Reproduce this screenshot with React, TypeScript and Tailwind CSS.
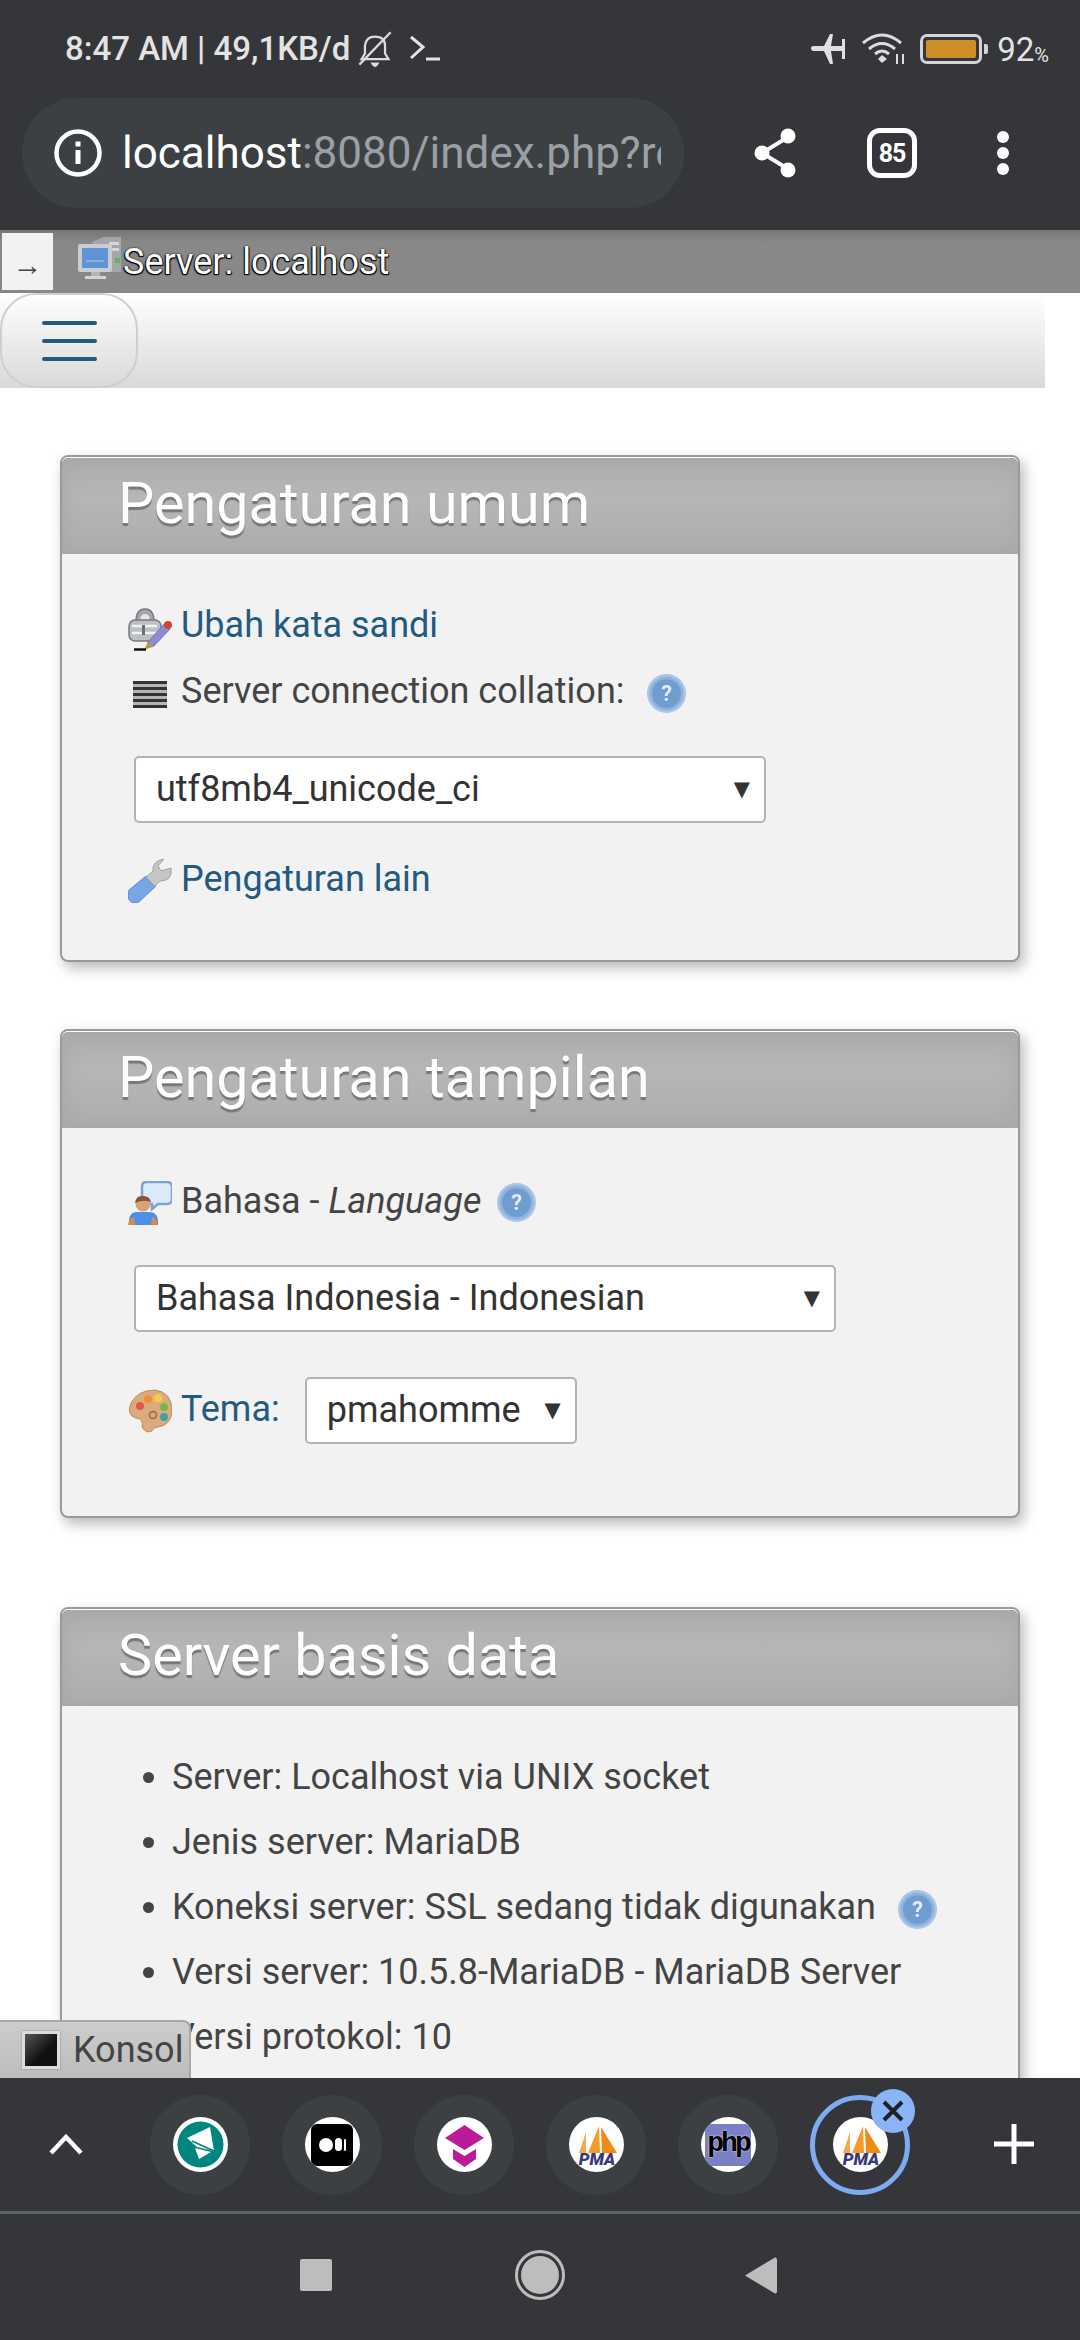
import type { ReactNode } from 'react';

// --- small bitmap-ish phpMyAdmin icons, drawn by hand ---
function LockPenIcon() {
  return (
    <svg viewBox="0 0 44 44" className="w-[44px] h-[44px] blur-[0.5px]">
      <path d="M8 15 Q8 2 17 2 Q26 2 26 15" fill="#a4a6ab" stroke="#77797e" strokeWidth="1.5" />
      <path d="M12 14 Q12 7 17 7 Q22 7 22 14 Z" fill="#e4e5e8" />
      <rect x="1" y="13" width="32" height="21" rx="6" fill="#bcbfc5" stroke="#77797e" strokeWidth="1.5" />
      <path d="M4 19h25M4 26h25" stroke="#f0f1f4" strokeWidth="2.5" />
      <rect x="14" y="18" width="3" height="10" fill="#6b6d72" />
      <path d="M20 35 L36 17 L42 22 L26 39 L19 41 Z" fill="#8d8bd6" stroke="#6c6ab8" strokeWidth="0.8" />
      <circle cx="40" cy="18" r="4" fill="#d9432e" />
      <path d="M20 35 L26 39 L16 43 Z" fill="#b79a3a" />
      <path d="M6 42.5h12" stroke="#111" strokeWidth="2.5" />
    </svg>
  );
}

function LinesIcon() {
  return (
    <svg viewBox="0 0 34 30" className="w-[34px] h-[30px] blur-[0.3px]">
      {[2, 8, 14, 20, 26].map((y) => (
        <rect key={y} x="0" y={y} width="34" height="3" fill="#333" />
      ))}
      {[5, 11, 17, 23].map((y) => (
        <rect key={y} x="0" y={y} width="34" height="3" fill="#b5b5b5" />
      ))}
    </svg>
  );
}

function WrenchIcon() {
  return (
    <svg viewBox="0 0 44 44" className="w-[44px] h-[44px] blur-[0.4px]">
      <path d="M1 31 L18 17 L28 27 L11 43 Q4 45 1 41 Q-1 36 1 31 Z" fill="#7aa5e4" stroke="#5f8dd0" strokeWidth="1" />
      <path d="M18 18 L25 12 Q24 2 36 0 L30 7 L33 12 L43 9 Q45 22 32 22 L27 27 Z" fill="#c6c6c6" stroke="#a0a0a0" strokeWidth="1" />
    </svg>
  );
}

function HelpIcon() {
  return (
    <svg viewBox="0 0 38 38" className="w-[39px] h-[39px] shrink-0 blur-[0.4px]">
      <circle cx="19" cy="19" r="19" fill="#a9c6e6" />
      <circle cx="19" cy="19" r="16.5" fill="#8fb3dc" />
      <circle cx="19" cy="19" r="14" fill="#6f9dd0" />
      <text x="19" y="26.5" textAnchor="middle" fontSize="21" fontWeight="700" fontFamily="Roboto, sans-serif" fill="#e3ecf6">?</text>
    </svg>
  );
}

function LanguageIcon() {
  return (
    <svg viewBox="0 0 44 44" className="w-[44px] h-[44px] blur-[0.4px]">
      <path d="M18 1 H39 Q44 1 44 6 V18 Q44 23 39 23 H30 L24 28 V23 H19 Q14 23 14 18 V6 Q14 1 18 1 Z" fill="#dbe9f8" stroke="#7ba3d6" strokeWidth="2.5" />
      <circle cx="15" cy="23" r="7.5" fill="#d9a37a" />
      <path d="M7 22 Q8 14 15 15 Q22 15 23 21 Q15 18 7 22 Z" fill="#8a5230" />
      <path d="M1 44 Q0 31 9 31 H21 Q31 31 30 44 Z" fill="#4d8fe6" />
      <path d="M0 44 Q1 37 6 36 L7 44 Z M30 44 Q29 37 24 36 L23 44 Z" fill="#d98a4c" />
    </svg>
  );
}

function PaletteIcon() {
  return (
    <svg viewBox="0 0 44 44" className="w-[44px] h-[44px] blur-[0.4px]">
      <path d="M3 14 Q10 1 27 1 Q43 3 44 20 Q44 36 30 38 Q25 38 24 42 Q18 45 14 38 Q16 30 8 29 Q-2 26 3 14 Z" fill="#dcab7c" stroke="#bd8a5b" strokeWidth="1" />
      <circle cx="12" cy="17" r="4" fill="#e2574f" />
      <circle cx="20" cy="10" r="4" fill="#ec8d3c" />
      <circle cx="30" cy="9" r="4" fill="#f0cf48" />
      <circle cx="36" cy="18" r="4" fill="#74b84c" />
      <circle cx="36" cy="28" r="4" fill="#3c9fb5" />
      <circle cx="25" cy="26" r="3.5" fill="none" stroke="#8a6a4a" strokeWidth="1.5" />
    </svg>
  );
}

function ServerIcon() {
  return (
    <svg viewBox="0 0 44 44" className="w-[44px] h-[44px] shrink-0 blur-[0.4px]">
      <path d="M14 6 L26 1 H43 V36 H14 Z" fill="#a3a5a8" />
      <rect x="31" y="6" width="10" height="3" fill="#d6d6d6" />
      <rect x="31" y="12" width="10" height="3" fill="#d6d6d6" />
      <rect x="37" y="22" width="5" height="5" fill="#58b85a" />
      <rect x="0" y="8" width="34" height="28" rx="2" fill="#c9ccd0" />
      <rect x="4" y="12" width="26" height="20" fill="#5f93d6" />
      <rect x="8" y="24" width="18" height="2" fill="#86aee0" />
      <path d="M13 36h9v4h-9z" fill="#b5b5b5" />
      <path d="M7 40h21v3H7z" fill="#d4d4d4" />
    </svg>
  );
}

function Arrow() {
  return <span className="ml-auto mr-[6px] text-[#333] text-[21px] leading-none font-[family-name:'DejaVu_Sans',sans-serif]">▼</span>;
}

function SelectBox({ value, className }: { value: string; className: string }) {
  return (
    <div className={`flex items-center pl-[20px] pr-[8px] bg-white border-2 border-[#b3b3b3] rounded-[5px] text-[#333] ${className}`}>
      <span className="pb-[2px]">{value}</span>
      <Arrow />
    </div>
  );
}

function Row({ icon, children }: { icon: ReactNode; children: ReactNode }) {
  return (
    <div className="flex items-center h-[44px]">
      <div className="w-[44px] h-[44px] flex items-center justify-center mr-[9px] shrink-0">{icon}</div>
      {children}
    </div>
  );
}

function Card({ title, children, className }: { title: string; children: ReactNode; className?: string }) {
  return (
    <section className={`mx-[60px] border-2 border-[#9a9a9a] rounded-[8px] bg-[#f2f2f2] shadow-[4px_6px_14px_rgba(0,0,0,0.28)] ${className ?? ''}`}>
      <div className="h-[97px] pl-[56px] flex items-center rounded-t-[6px] border-t border-white bg-[linear-gradient(#adadad,#b6b6b6_40%,#adadad)] shadow-[inset_0_0_20px_#a6a6a6]">
        <h2 className="text-[57.5px] leading-none text-white [text-shadow:0_3px_1px_#777] pb-[4px]">{title}</h2>
      </div>
      {children}
    </section>
  );
}

// --- browser tab favicons ---
function PmaLogo() {
  return (
    <svg viewBox="0 0 55 55" className="w-[55px] h-[55px]">
      <circle cx="27.5" cy="27.5" r="27.5" fill="#fff" />
      <path d="M10 36 L17 15 L17 36 Z" fill="#f6a94a" />
      <path d="M19 36 L30 9 L31 36 Z" fill="#f49b2c" />
      <path d="M33 36 L32 10 L48 36 Z" fill="#f08a17" />
      <text x="28" y="48" textAnchor="middle" fontSize="17" fontWeight="900" fontStyle="italic" fontFamily="Roboto, sans-serif" fill="#3a3a78">PMA</text>
    </svg>
  );
}

function TabBubble({ children }: { children: ReactNode }) {
  return (
    <div className="w-[100px] h-[100px] rounded-full bg-[#3c4043] flex items-center justify-center shrink-0">{children}</div>
  );
}

function White({ children }: { children: ReactNode }) {
  return <div className="w-[55px] h-[55px] rounded-full bg-white overflow-hidden flex items-center justify-center">{children}</div>;
}

export default function App() {
  return (
    <div className="w-[1080px] h-[2340px] flex flex-col overflow-hidden bg-white font-[family-name:Roboto,sans-serif] text-[36px] text-[#444]">
      {/* status bar + browser toolbar */}
      <header className="h-[230px] shrink-0 bg-[#35363a]">
        <div className="h-[98px] pl-[65px] pr-[31px] flex items-center text-[#e3e3e3]">
          <span className="text-[33px] font-medium leading-none pb-[2px] whitespace-nowrap">8:47 AM | 49,1KB/d</span>
          <svg viewBox="0 0 34 34" className="w-[38px] h-[38px] ml-[6px]" fill="none" stroke="#dcdcdc" strokeWidth="2">
            <path d="M5 26 H29 L26 21 V14 Q26 6 17 6 Q9 6 8 14 V21 Z" />
            <path d="M3 31 L31 2" />
            <path d="M13 29 H21 Q19 33 17 33 Q15 33 13 29 Z" fill="#dcdcdc" stroke="none" />
          </svg>
          <svg viewBox="0 0 34 30" className="w-[34px] h-[30px] ml-[15px]" fill="none" stroke="#e3e3e3" strokeWidth="3">
            <path d="M2 3 L14 13 L2 24" />
            <path d="M17 25 H31" />
          </svg>
          <div className="ml-auto flex items-center">
            <svg viewBox="0 0 35 30" className="w-[35px] h-[30px]" fill="#e0e0e0">
              <path d="M0 14 Q0 12 3 12 H13 L19 0 H22 L20 12 H31 V5 H34 V25 H31 V17 H20 L22 30 H19 L13 17 H3 Q0 17 0 14 Z" />
            </svg>
            <svg viewBox="0 0 44 32" className="w-[44px] h-[32px] ml-[16px]" fill="none" stroke="#dcdcdc" strokeWidth="3">
              <path d="M1 10 Q20 -6 39 10" />
              <path d="M7 16 Q20 5 33 16" />
              <path d="M13 21 Q20 15 27 21" />
              <path d="M16 26 L20 30 L25 26 L20 22 Z" fill="#dcdcdc" stroke="none" />
              <path d="M35 21 V31 M41 21 V31" strokeWidth="2" />
            </svg>
            <div className="ml-[14px] w-[62px] h-[30px] border-[3px] border-[#d4d4d4] rounded-[7px] p-[3px] flex">
              <div className="w-full h-full bg-[#ce8f2b] rounded-[2px]" />
            </div>
            <div className="w-[4px] h-[10px] ml-[2px] bg-[#d4d4d4] rounded-r-[2px]" />
            <span className="ml-[9px] text-[33px] leading-none">92</span>
            <span className="text-[20px] leading-none self-end mb-[1px]">%</span>
          </div>
        </div>
        <div className="flex items-center h-[110px]">
          <div className="ml-[22px] w-[662px] h-[110px] rounded-full bg-[#3c4043] flex items-center pl-[32px]">
            <svg viewBox="0 0 48 48" className="w-[48px] h-[48px] shrink-0" fill="none">
              <circle cx="24" cy="24" r="21.5" stroke="#fff" strokeWidth="4.5" />
              <rect x="21.5" y="21" width="5" height="14" fill="#fff" />
              <rect x="21.5" y="12.5" width="5" height="5" fill="#fff" />
            </svg>
            <div className="ml-[20px] w-[539px] overflow-hidden whitespace-nowrap text-[44px] leading-none text-[#9aa0a6]">
              <span className="text-white">localhost</span>:8080/index.php?redirect
            </div>
          </div>
          <svg viewBox="0 0 44 50" className="w-[44px] h-[50px] ml-[70px]" fill="#fff">
            <path d="M34 9 L8 25 L34 41" fill="none" stroke="#fff" strokeWidth="4" />
            <circle cx="34" cy="8" r="7.5" />
            <circle cx="8" cy="25" r="7.5" />
            <circle cx="34" cy="42" r="7.5" />
          </svg>
          <div className="ml-[69px] w-[50px] h-[50px] border-[5px] border-white rounded-[13px] flex items-center justify-center text-white text-[25px] font-bold leading-none tracking-[-1px]">
            85
          </div>
          <div className="ml-[80px] flex flex-col gap-[4px]">
            <span className="w-[12px] h-[12px] rounded-full bg-white" />
            <span className="w-[12px] h-[12px] rounded-full bg-white" />
            <span className="w-[12px] h-[12px] rounded-full bg-white" />
          </div>
        </div>
      </header>

      {/* server breadcrumb */}
      <div className="h-[63px] shrink-0 flex items-center bg-[linear-gradient(#777,#888_20%,#888)]">
        <div className="ml-[2px] w-[51px] h-[57px] bg-[#f2f2f2] flex items-end justify-center text-[#444] text-[30px] leading-[50px] font-[family-name:'Liberation_Sans',sans-serif]">→</div>
        <div className="ml-[25px] mb-[8px]"><ServerIcon /></div>
        <span className="ml-[1px] text-white text-[36px] leading-none [text-shadow:0_0_2px_#000,1px_1px_1px_#000,-1px_1px_1px_#000]">Server: localhost</span>
      </div>

      {/* hamburger strip */}
      <div className="h-[95px] w-[1045px] shrink-0 bg-[linear-gradient(#fff,#d9d9d9)]">
        <div className="w-[138px] h-[95px] rounded-[36px] border-2 border-[#cfcfcf] flex flex-col items-center justify-center gap-[14px]">
          <span className="w-[55px] h-[4px] rounded-full bg-[#235a81]" />
          <span className="w-[55px] h-[4px] rounded-full bg-[#235a81]" />
          <span className="w-[55px] h-[4px] rounded-full bg-[#235a81]" />
        </div>
      </div>

      {/* page content */}
      <main className="relative flex-1 overflow-hidden bg-white pt-[67px]">
        <Card title="Pengaturan umum">
          <div className="pl-[66px] pt-[53px] pb-[57px]">
            <Row icon={<LockPenIcon />}>
              <a className="text-[#235a81] pb-[8px]">Ubah kata sandi</a>
            </Row>
            <div className="mt-[21px]">
              <Row icon={<LinesIcon />}>
                <span className="pb-[7px]">Server connection collation:</span>
                <span className="ml-[23px] pb-[2px]"><HelpIcon /></span>
              </Row>
            </div>
            <SelectBox value="utf8mb4_unicode_ci" className="mt-[40px] ml-[6px] w-[632px] h-[67px]" />
            <div className="mt-[36px]">
              <Row icon={<WrenchIcon />}>
                <a className="text-[#235a81] pb-[5px]">Pengaturan lain</a>
              </Row>
            </div>
          </div>
        </Card>

        <Card title="Pengaturan tampilan" className="mt-[67px]">
          <div className="pl-[66px] pt-[53px] pb-[72px]">
            <Row icon={<LanguageIcon />}>
              <span className="pb-[5px]">Bahasa - <em>Language</em></span>
              <span className="ml-[15px] pb-[2px]"><HelpIcon /></span>
            </Row>
            <SelectBox value="Bahasa Indonesia - Indonesian" className="mt-[40px] ml-[6px] w-[702px] h-[67px]" />
            <div className="flex items-center mt-[45px]">
              <Row icon={<PaletteIcon />}>
                <a className="text-[#235a81] pb-[3px]">Tema:</a>
              </Row>
              <SelectBox value="pmahomme" className="ml-[25px] w-[272px] h-[67px]" />
            </div>
          </div>
        </Card>

        <Card title="Server basis data" className="mt-[89px]">
          <ul className="list-disc pl-[110px] pt-[39px] pb-[40px]">
            <li className="h-[65px] leading-[65px]">Server: Localhost via UNIX socket</li>
            <li className="h-[65px] leading-[65px]">Jenis server: MariaDB</li>
            <li className="h-[65px] leading-[65px]">
              Koneksi server: SSL sedang tidak digunakan
              <span className="inline-block ml-[22px] align-middle"><HelpIcon /></span>
            </li>
            <li className="h-[65px] leading-[65px]">Versi server: 10.5.8-MariaDB - MariaDB Server</li>
            <li className="h-[65px] leading-[65px]">Versi protokol: 10</li>
          </ul>
        </Card>

        {/* console tab sits over the page */}
        <div className="absolute left-0 bottom-0 w-[191px] h-[58px] flex items-center pl-[22px] rounded-tr-[8px] border-t-2 border-r-2 border-[#a8a8a8] bg-[linear-gradient(#cdcdcd,#bcbcbc)]">
          <div className="w-[38px] h-[38px] bg-[linear-gradient(135deg,#555,#111_60%)] border-[3px] border-[#dcdcdc] shadow-[0_0_2px_#888]" />
          <span className="ml-[13px] text-[36px] leading-none text-[#444]">Konsol</span>
        </div>
      </main>

      {/* tab strip */}
      <div className="h-[133px] shrink-0 bg-[#35363a] flex items-center relative">
        <svg viewBox="0 0 34 22" className="absolute left-[49px] top-[55px] w-[34px] h-[22px]" fill="none" stroke="#fff" strokeWidth="4.5">
          <path d="M2 20 L17 4 L32 20" />
        </svg>
        <div className="ml-[150px] flex gap-[32px]">
          <TabBubble>
            <White>
              <svg viewBox="0 0 55 55" className="w-[55px] h-[55px]">
                <circle cx="27.5" cy="27.5" r="23" fill="#00857f" />
                <path d="M14 21 L37 10 L41 34 L24 30 Z" fill="#fff" />
                <path d="M22 31 L38 35 L26 42 Z" fill="#fff" />
                <path d="M19 24 L41 34" stroke="#00857f" strokeWidth="1.5" />
              </svg>
            </White>
          </TabBubble>
          <TabBubble>
            <White>
              <div className="w-[42px] h-[42px] bg-black rounded-[6px] flex items-center justify-center gap-[2px]">
                <span className="w-[14px] h-[14px] rounded-full bg-white" />
                <span className="w-[7px] h-[13px] rounded-full bg-white" />
                <span className="w-[2px] h-[12px] rounded-full bg-white" />
              </div>
            </White>
          </TabBubble>
          <TabBubble>
            <White>
              <svg viewBox="0 0 55 55" className="w-[55px] h-[55px]">
                <path d="M27.5 8 L47 21 L27.5 33 L8 21 Z" fill="#bc1a9b" />
                <path d="M16 32 L27.5 39 L39 32 V42 L27.5 50 L16 42 Z" fill="#bc1a9b" />
              </svg>
            </White>
          </TabBubble>
          <TabBubble><PmaLogo /></TabBubble>
          <TabBubble>
            <White>
              <div className="w-[46px] h-[42px] bg-[#7b7fc4] rounded-[6px] flex items-center justify-center text-black text-[28px] font-[family-name:'Liberation_Mono',monospace] font-bold leading-none tracking-[-3px] [text-shadow:0_0_2px_#fff] pb-[2px]">php</div>
            </White>
          </TabBubble>
          <div className="relative w-[100px] h-[100px] rounded-full border-[5px] border-[#7daaf0] flex items-center justify-center shrink-0">
            <PmaLogo />
            <div className="absolute left-[56px] top-[-11px] w-[44px] h-[44px] rounded-full bg-[#8ab4f8] flex items-center justify-center">
              <svg viewBox="0 0 24 24" className="w-[24px] h-[24px]" stroke="#202124" strokeWidth="4" fill="none">
                <path d="M3 3 L21 21 M21 3 L3 21" />
              </svg>
            </div>
          </div>
        </div>
        <svg viewBox="0 0 40 40" className="absolute left-[994px] top-[46px] w-[40px] h-[40px]" stroke="#fff" strokeWidth="5">
          <path d="M20 0 V40 M0 20 H40" />
        </svg>
      </div>

      {/* android nav bar */}
      <nav className="h-[129px] shrink-0 bg-[#35363a] border-t-[3px] border-[#5f6368] flex items-center relative pb-[4px]">
        <div className="ml-[300px] w-[32px] h-[32px] rounded-[2px] bg-[#bdbdbd]" />
        <div className="ml-[183px] w-[50px] h-[50px] rounded-full border-[3px] border-[#bdbdbd] p-[3px]">
          <div className="w-full h-full rounded-full bg-[#bdbdbd]" />
        </div>
        <svg viewBox="0 0 32 37" className="ml-[180px] w-[32px] h-[37px]" fill="#bdbdbd">
          <path d="M0 18.5 L30 0.5 Q32 0 32 3 V34 Q32 37 30 36.5 Z" />
        </svg>
      </nav>
    </div>
  );
}
